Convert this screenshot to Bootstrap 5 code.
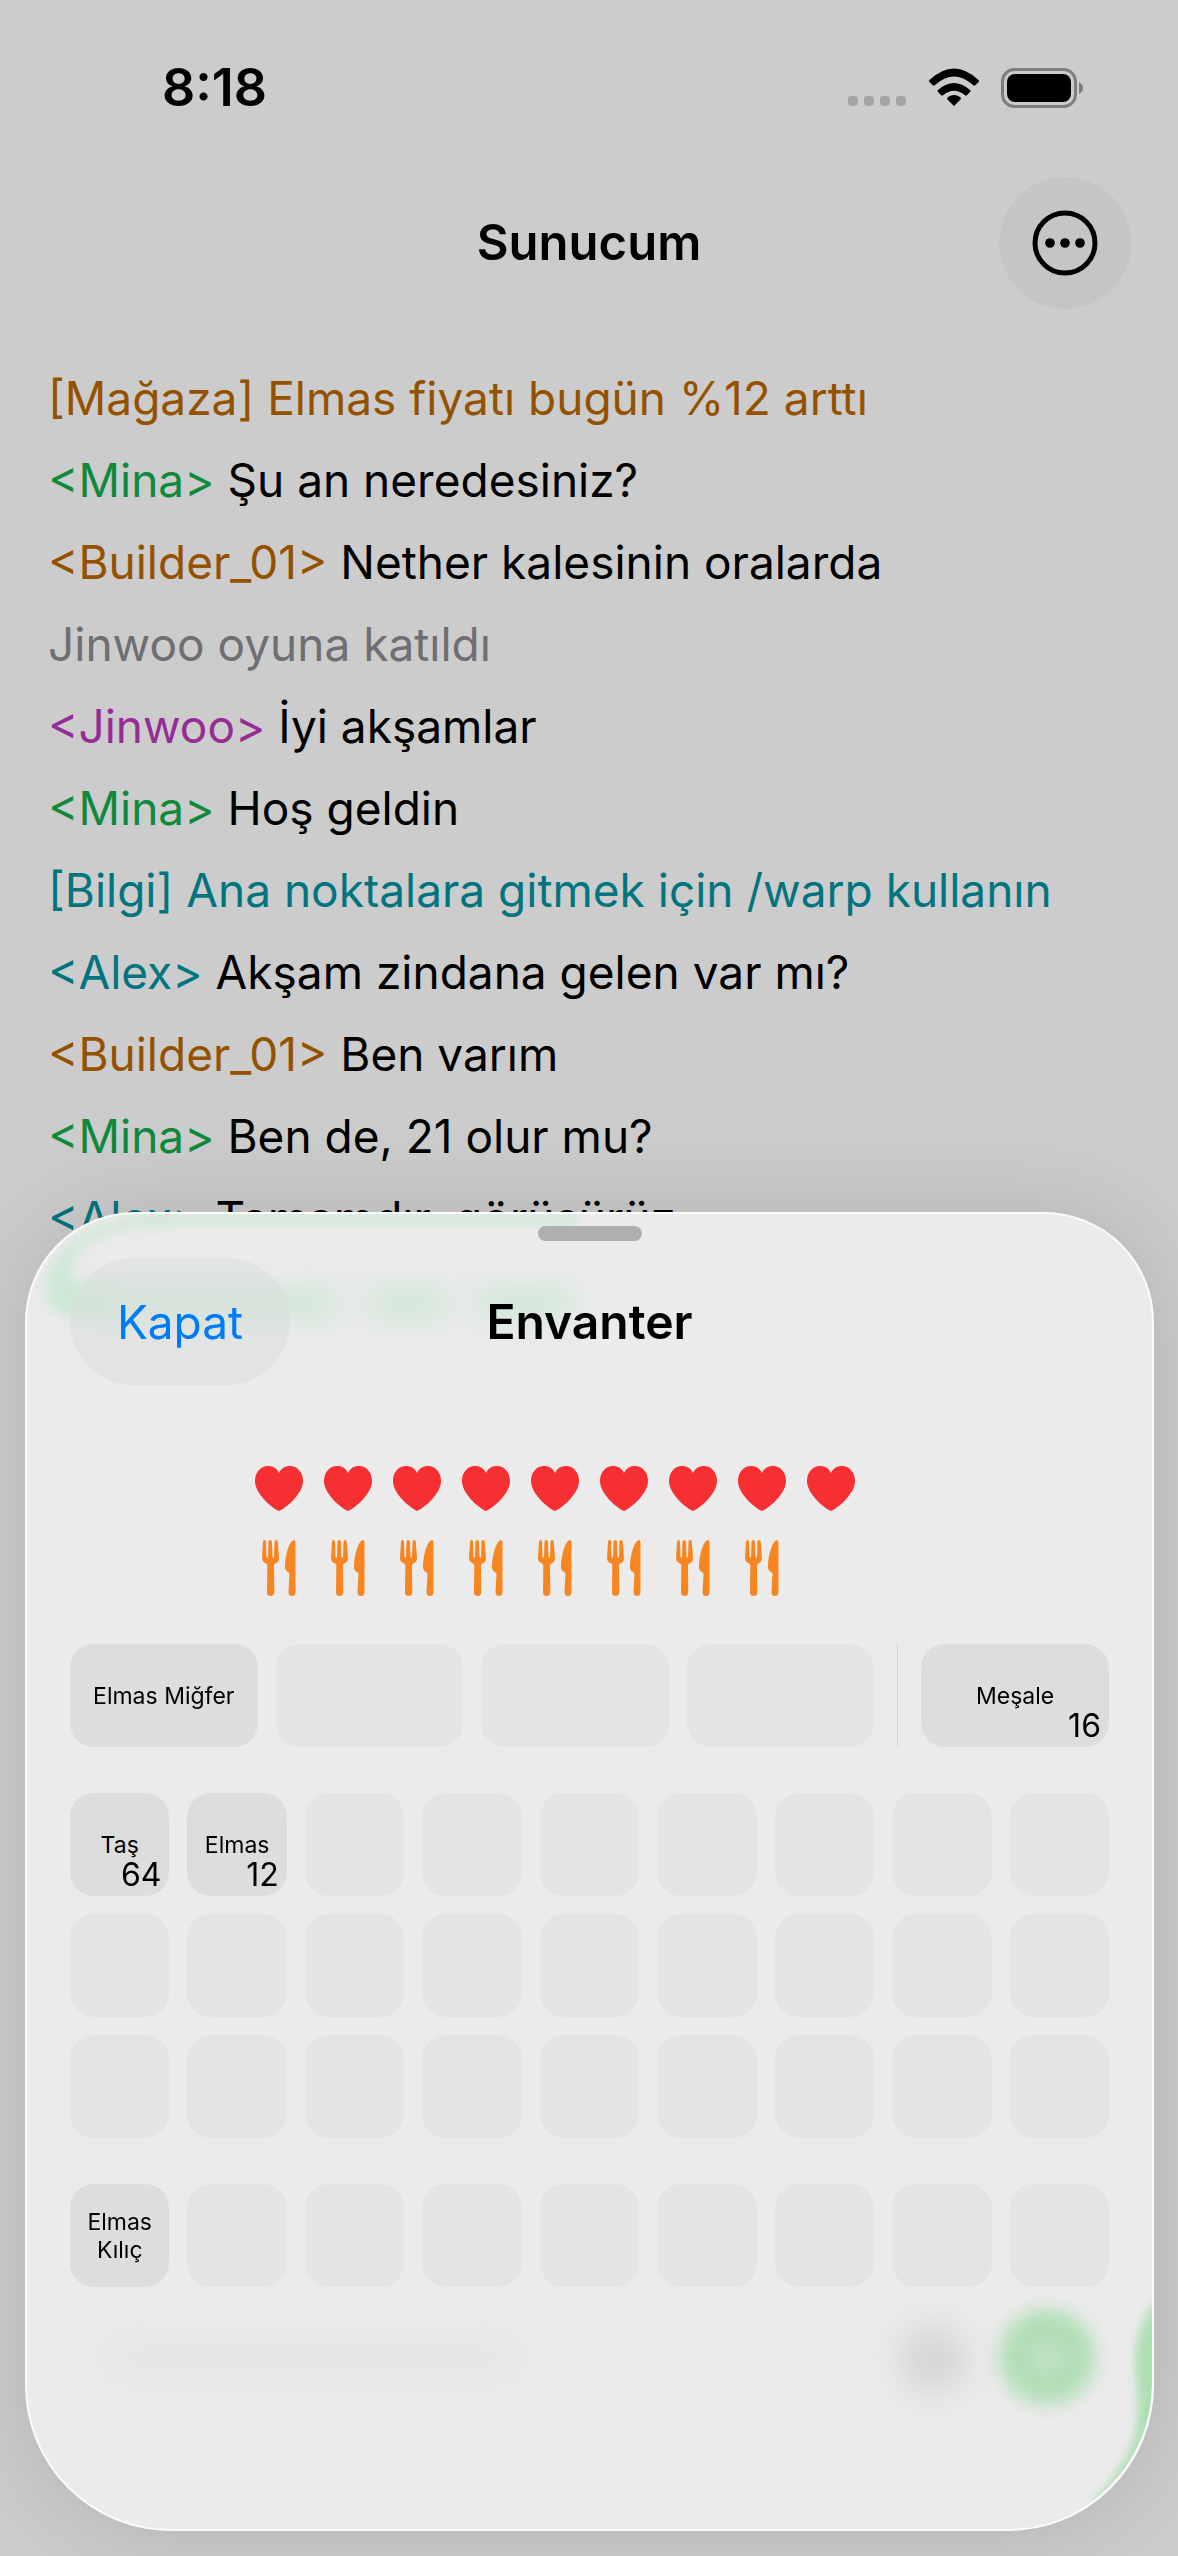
<!DOCTYPE html>
<html lang="tr">
<head>
<meta charset="utf-8">
<meta name="viewport" content="width=device-width, initial-scale=1">
<title>Sunucum</title>
<link href="https://cdn.jsdelivr.net/npm/bootstrap@5.3.0/dist/css/bootstrap.min.css" rel="stylesheet">
<style>
  body { background: #ccc; color: #000; font-family: Inter, "Liberation Sans", sans-serif; }
  .screen { min-height: 100vh; overflow: hidden; }
  .status-bar { height: 176px; padding: 0 95px 0 162px; font-size: 52px; font-weight: 600; line-height: 176px; }
  .status-bar svg { display: block; }
  .title-bar { display: grid; grid-template-columns: 1fr auto 1fr; padding: 0 47px; height: 134px; }
  .heading { font-size: 49px; font-weight: 600; line-height: 58px; margin: 0; }
  .sheet .heading { font-size: 48px; }
  .more-btn { width: 132px; height: 132px; background: #c5c5c5; border: 0; padding: 0; justify-self: end; }
  .chat-log { padding: 47px 48px 0; font-size: 46px; line-height: 82px; }
  .c-gold { color: #945200; } .c-green { color: #0f8a3c; } .c-gray { color: #6e6e73; }
  .c-purple { color: #962d96; } .c-teal { color: #007580; }
  .sheet { left: 25px; right: 24px; bottom: 25px; padding: 12px 43px 242px; background: #ebebeb;
    border: 2px solid #fbfbfb; border-radius: 110px 110px 146px 146px; box-shadow: 0 0 90px rgba(0,0,0,.13); overflow: hidden; }
  .glow { inset: 0; overflow: hidden; border-radius: inherit; pointer-events: none; }
  .glow i, .glow svg { position: absolute; display: block; }
  .glow-top { left: 120px; top: 0; width: 430px; height: 12px; background: #d2e9d9; filter: blur(5px); }
  .glow-corner { left: 0; top: 0; filter: blur(7px); }
  .glow-name { left: 60px; top: 72px; height: 34px; background: #d0e8d8; filter: blur(14px); }
  .glow-n1 { width: 250px; } .glow-n2 { left: 342px; width: 76px; } .glow-n3 { left: 450px; width: 94px; }
  .glow-hint { left: 80px; bottom: 156px; width: 410px; height: 32px; background: #e4e4e4; filter: blur(18px); }
  .glow-mic { right: 185px; bottom: 136px; width: 68px; height: 68px; border-radius: 50%; background: #d6d6d6; filter: blur(16px); }
  .glow-send { right: 57px; bottom: 124px; width: 96px; height: 96px; border-radius: 50%; filter: blur(9px);
    background: radial-gradient(circle, #d0e4d3 0, #b1deb6 30%); }
  .glow-edge { right: 0; bottom: 0; filter: blur(4px); overflow: visible; }
  .grabber { width: 104px; height: 15px; border-radius: 8px; background: #aeb0b0; }
  .sheet-bar { display: grid; grid-template-columns: 1fr auto 1fr; margin-top: 17px; }
  .close-btn { width: 220px; height: 127px; border-radius: 64px; border: 0; background: rgba(218,222,219,.5); color: #007bf7; font-size: 46px; line-height: 58px; justify-self: start; }
  .stats { margin-top: 73px; }
  .stat-row { display: grid; grid-template-columns: repeat(10, 69px); justify-content: center; justify-items: center; align-items: center; }
  .hearts { height: 60px; } .food { height: 60px; margin-top: 20px; }
  .armor { gap: 18px; margin-top: 46px; }
  .armor .slot { flex: 1 1 0; }
  .divider { width: 1px; margin: 0 5px; background: #d0d0d0; }
  .bag { display: grid; grid-template-columns: repeat(9, minmax(0, 1fr)); gap: 18px; margin-top: 46px; }
  .slot { height: 103px; border-radius: 24px; background: #e4e4e4; font-size: 23px; line-height: 28px; text-align: center; }
  .slot.full { background: #ddd; }
  .count { right: 8px; bottom: 3px; font-size: 32px; line-height: 36px; }
</style>
<script src="https://cdn.jsdelivr.net/npm/bootstrap@5.3.0/dist/js/bootstrap.bundle.min.js"></script>
</head>
<body>
<svg class="d-none">
  <symbol id="heart" viewBox="0 0 48 45"><path d="M24 45C22 45 0 30 0 15C0 6 6 0 13 0C18 0 22 2.500 24 7C26 2.500 30 0 35 0C42 0 48 6 48 15C48 30 26 45 24 45Z" fill="#f62f32"/></symbol>
  <symbol id="meal" viewBox="0 0 34 56"><g fill="#f78621"><path d="M1 2Q1 0 2.500 0T4 2L4.500 17Q5.300 18.300 6 17L6.500 2Q6.600 0 8.200 0T10 2L10.500 17Q11.200 18.300 12 17L12.500 2Q12.600 0 14.100 0T15.800 2L17 18Q17 22 13.500 23.500Q12 24 12 25.500L12.300 52Q12.300 56 8.500 56T5 52L5.300 25.500Q5.300 24 4 23.500Q0 22 0 18Z"/><path d="M33.500 2V52Q33.500 56 30 56T26.500 52L27.500 34Q27.500 33 26 32Q23 30.500 23 27C23 18 25.500 7 29.500 1.500Q31 0 32 0T33.500 2Z"/></g></symbol>
</svg>
<div class="screen position-relative">
  <div class="status-bar d-flex justify-content-between align-items-center">
    <time>8:18</time>
    <svg width="236" height="40" viewBox="0 0 236 40" aria-hidden="true">
      <g fill="#a3a3a3"><rect x="1" y="28" width="10" height="10" rx="4"/><rect x="17" y="28" width="10" height="10" rx="4"/><rect x="33" y="28" width="10" height="10" rx="4"/><rect x="49" y="28" width="10" height="10" rx="4"/></g>
      <path d="M107 38l-6.500-6.500q-1-1.500.5-2.500q6-4 12 0q1.500 1 .5 2.500zM91 22q16-14 32 0q1 1 0 2l-3 3.200q-1 .8-2 0q-11-9-22 0q-1 .8-2 0l-3-3.200q-1-1 0-2zM82.500 12q24.500-23 49 0q1 1 0 2l-3.200 3.300q-1 .8-2 0q-19.300-17.500-38.600 0q-1 .8-2 0l-3.200-3.300q-1-1 0-2z"/>
      <rect x="155.500" y="1.500" width="73" height="37" rx="12" fill="none" stroke="#7d7d7d" stroke-width="3"/>
      <rect x="160" y="6" width="64" height="28" rx="8"/>
      <path d="M232 14q4 2 4 6t-4 6z" fill="#7d7d7d"/>
    </svg>
  </div>
  <header class="title-bar align-items-center">
    <span></span>
    <h1 class="heading">Sunucum</h1>
    <button class="more-btn rounded-circle d-flex align-items-center justify-content-center" type="button" aria-label="Diğer">
      <svg width="66" height="66" viewBox="0 0 66 66"><circle cx="33" cy="33" r="30" fill="none" stroke="#000" stroke-width="5"/><circle cx="18" cy="33" r="4.800"/><circle cx="33" cy="33" r="4.800"/><circle cx="48" cy="33" r="4.800"/></svg>
    </button>
  </header>
  <main class="chat-log">
    <div class="c-gold">[Mağaza] Elmas fiyatı bugün %12 arttı</div>
    <div><span class="c-green">&lt;Mina&gt;</span> Şu an neredesiniz?</div>
    <div><span class="c-gold">&lt;Builder_01&gt;</span> Nether kalesinin oralarda</div>
    <div class="c-gray">Jinwoo oyuna katıldı</div>
    <div><span class="c-purple">&lt;Jinwoo&gt;</span> İyi akşamlar</div>
    <div><span class="c-green">&lt;Mina&gt;</span> Hoş geldin</div>
    <div class="c-teal">[Bilgi] Ana noktalara gitmek için /warp kullanın</div>
    <div><span class="c-teal">&lt;Alex&gt;</span> Akşam zindana gelen var mı?</div>
    <div><span class="c-gold">&lt;Builder_01&gt;</span> Ben varım</div>
    <div><span class="c-green">&lt;Mina&gt;</span> Ben de, 21 olur mu?</div>
    <div><span class="c-teal">&lt;Alex&gt;</span> Tamamdır, görüşürüz</div>
  </main>
</div>

<section class="sheet position-fixed" aria-labelledby="sheetTitle">
  <div class="glow position-absolute" aria-hidden="true">
    <i class="glow-top"></i>
    <svg class="glow-corner" width="150" height="120" viewBox="0 0 150 120"><path d="M130 0C70 2 22 30 18 75C16 95 35 108 90 105V72C52 74 42 65 42 55C48 30 80 14 130 10Z" fill="#cde8d5"/></svg>
    <i class="glow-name glow-n1"></i><i class="glow-name glow-n2"></i><i class="glow-name glow-n3"></i>
    <i class="glow-hint"></i><i class="glow-mic"></i><i class="glow-send"></i>
    <svg class="glow-edge" width="120" height="240" viewBox="0 0 120 240"><path d="M122 14C108 34 103 55 103 78C105 100 109 130 100 155C90 178 78 195 60 212L90 240H150V14Z" fill="#aedfb4"/></svg>
  </div>
  <div class="position-relative">
    <div class="grabber mx-auto"></div>
    <div class="sheet-bar align-items-center">
      <button class="close-btn" type="button">Kapat</button>
      <h2 class="heading" id="sheetTitle">Envanter</h2>
      <span></span>
    </div>
    <div class="stats">
      <div class="stat-row hearts" role="img" aria-label="Can 9">
        <svg width="48" height="45"><use href="#heart"/></svg><svg width="48" height="45"><use href="#heart"/></svg><svg width="48" height="45"><use href="#heart"/></svg><svg width="48" height="45"><use href="#heart"/></svg><svg width="48" height="45"><use href="#heart"/></svg><svg width="48" height="45"><use href="#heart"/></svg><svg width="48" height="45"><use href="#heart"/></svg><svg width="48" height="45"><use href="#heart"/></svg><svg width="48" height="45"><use href="#heart"/></svg>
      </div>
      <div class="stat-row food" role="img" aria-label="Açlık 8">
        <svg width="34" height="56"><use href="#meal"/></svg><svg width="34" height="56"><use href="#meal"/></svg><svg width="34" height="56"><use href="#meal"/></svg><svg width="34" height="56"><use href="#meal"/></svg><svg width="34" height="56"><use href="#meal"/></svg><svg width="34" height="56"><use href="#meal"/></svg><svg width="34" height="56"><use href="#meal"/></svg><svg width="34" height="56"><use href="#meal"/></svg>
      </div>
    </div>
    <div class="armor d-flex">
      <div class="slot full d-flex align-items-center justify-content-center">Elmas Miğfer</div>
      <div class="slot"></div><div class="slot"></div><div class="slot"></div>
      <div class="divider"></div>
      <div class="slot full position-relative d-flex align-items-center justify-content-center">Meşale<span class="count position-absolute">16</span></div>
    </div>
    <div class="bag">
      <div class="slot full position-relative d-flex align-items-center justify-content-center">Taş<span class="count position-absolute">64</span></div>
      <div class="slot full position-relative d-flex align-items-center justify-content-center">Elmas<span class="count position-absolute">12</span></div>
      <div class="slot"></div><div class="slot"></div><div class="slot"></div><div class="slot"></div><div class="slot"></div><div class="slot"></div><div class="slot"></div>
      <div class="slot"></div><div class="slot"></div><div class="slot"></div><div class="slot"></div><div class="slot"></div><div class="slot"></div><div class="slot"></div><div class="slot"></div><div class="slot"></div>
      <div class="slot"></div><div class="slot"></div><div class="slot"></div><div class="slot"></div><div class="slot"></div><div class="slot"></div><div class="slot"></div><div class="slot"></div><div class="slot"></div>
    </div>
    <div class="bag">
      <div class="slot full d-flex align-items-center justify-content-center">Elmas<br>Kılıç</div>
      <div class="slot"></div><div class="slot"></div><div class="slot"></div><div class="slot"></div><div class="slot"></div><div class="slot"></div><div class="slot"></div><div class="slot"></div>
    </div>
  </div>
</section>
</body>
</html>
